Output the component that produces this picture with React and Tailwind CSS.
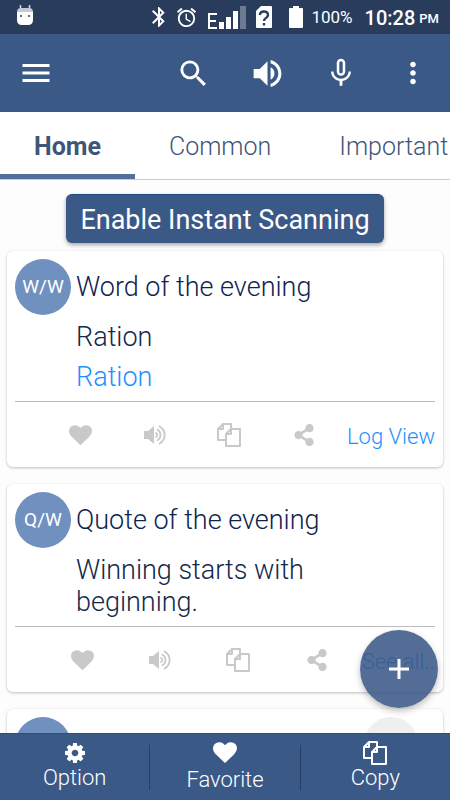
import { FaShareAlt } from "react-icons/fa";
import { MdAccessAlarm, MdBluetooth, MdMenu, MdMicNone, MdMoreVert, MdSearch, MdVolumeUp } from "react-icons/md";

const TABS = ["Home", "Common", "Important"];

const CARDS = [
  {
    badge: "W/W",
    title: "Word of the evening",
    text: "Ration",
    translation: "Ration",
    link: "Log View",
  },
  {
    badge: "Q/W",
    title: "Quote of the evening",
    text: "Winning starts with beginning.",
    link: "See all..",
  },
];

function HeartIcon({ className }) {
  return (
    <svg viewBox="0 128 1792 1536" fill="currentColor" className={className} aria-hidden="true">
      <path d="M896 1664q-26 0-44-18l-624-602q-10-8-27.500-26t-55.500-65.500-68-97.500-53.500-121-23.500-138q0-220 127-344t351-124q62 0 126.500 21.500t120 58 95.500 68.500 76 68q36-36 76-68t95.500-68.500 120-58 126.500-21.500q224 0 351 124t127 344q0 221-229 450l-623 600q-18 18-44 18z" />
    </svg>
  );
}

function CopyIcon({ className }) {
  return (
    <svg viewBox="0 0 24 24" fill="none" stroke="currentColor" strokeWidth="2" strokeLinejoin="round" className={className} aria-hidden="true">
      <path d="M9 17H1V6l5-5h8v5" />
      <path d="M6 1v5H1" />
      <path d="M14 6h9v17H9V11z" />
      <path d="M14 6v5H9" />
    </svg>
  );
}

function GearIcon({ className }) {
  return (
    <svg viewBox="0 0 1536 1536" fill="currentColor" className={className} aria-hidden="true">
      <path d="M1024 768q0-106-75-181t-181-75-181 75-75 181 75 181 181 75 181-75 75-181zm512-109v222q0 12-8 23t-20 13l-185 28q-19 54-39 91 35 50 107 138 10 12 10 25t-9 23q-27 37-99 108t-94 71q-12 0-26-9l-138-108q-44 23-91 38-16 136-29 186-7 28-36 28h-222q-14 0-24.500-8.500t-11.500-21.500l-28-184q-49-16-90-37l-141 107q-10 9-25 9-14 0-25-11-126-114-165-168-7-10-7-23 0-12 8-23 15-21 51-66.500t54-70.500q-27-50-41-99l-183-27q-13-2-21-12.500t-8-23.500v-222q0-12 8-23t19-13l186-28q14-46 39-92-40-57-107-138-10-12-10-24 0-10 9-23 26-36 98.500-107.500t94.500-71.500q13 0 26 10l138 107q44-23 91-38 16-136 29-186 7-28 36-28h222q14 0 24.500 8.500t11.500 21.500l28 184q49 16 90 37l142-107q9-9 24-9 13 0 25 10 129 119 165 170 7 8 7 22 0 12-8 23-15 21-51 66.500t-54 70.500q26 50 41 98l183 28q13 2 21 12.500t8 23.500z" />
    </svg>
  );
}

function SpeakerIcon({ className }) {
  return (
    <svg viewBox="0 0 22 20" className={className} aria-hidden="true">
      <path d="M0 6h4l6-5v18l-6-5H0z" fill="currentColor" />
      <g fill="none" stroke="currentColor" strokeWidth="1.8" strokeLinecap="round">
        <path d="M12 8a2.200 2.200 0 0 1 0 4" />
        <path d="M13.500 4.800a6 6 0 0 1 0 10.400" />
        <path d="M15.500 1.500a9.600 9.600 0 0 1 0 17" />
      </g>
    </svg>
  );
}

function StatusBar() {
  return (
    <div className="h-[34px] shrink-0 bg-[#293c5c] text-white flex items-center justify-between pl-4 pr-[11px]">
      <svg viewBox="0 0 18 22" className="w-[18px] h-[22px] mb-1" aria-hidden="true">
        <path d="M4.500 1v5M13.500 1v5" stroke="#d5dae2" strokeWidth="1.500" />
        <path d="M1 8q0-4 4-4h8q4 0 4 4z" fill="#c3cad6" />
        <path d="M1 8h16v8q0 5-5 5H6q-5 0-5-5z" fill="#fff" />
        <circle cx="5" cy="12" r="1" fill="#293c5c" />
        <circle cx="13" cy="12" r="1" fill="#293c5c" />
      </svg>
      <div className="flex items-center">
        <MdBluetooth className="w-6 h-6" />
        <MdAccessAlarm className="w-[23px] h-[23px] ml-1" />
        <svg viewBox="0 0 42 24" className="w-[42px] h-6 ml-2" aria-hidden="true">
          <path d="M11 9H3v14h8M3 16h7" fill="none" stroke="#fff" strokeWidth="2" />
          <path d="M13 17h5v7h-5zM20 12h5v12h-5zM27 6h5v18h-5z" fill="#fff" />
          <path d="M34 1h6v23h-6z" fill="#6d7b92" />
        </svg>
        <svg viewBox="0 0 16 22" className="w-4 h-[22px] ml-2" aria-hidden="true">
          <path d="M5 0h10q1 0 1 1v20q0 1-1 1H1q-1 0-1-1V5z" fill="#fff" />
          <path d="M4 9q0-3.500 4-3.500T12 9q0 2-2 3t-2 3M8 17v2.500" fill="none" stroke="#293c5c" strokeWidth="2.400" />
        </svg>
        <svg viewBox="0 0 14 22" className="w-[14px] h-[22px] ml-[17px]" aria-hidden="true">
          <path d="M4 0h6v2h3q1 0 1 1v18q0 1-1 1H1q-1 0-1-1V3q0-1 1-1h3z" fill="#fff" />
        </svg>
        <span className="text-[17px] ml-2 mt-px">100%</span>
        <span className="text-[20px] font-medium ml-3 mt-px">10:28</span>
        <span className="text-[13px] font-medium ml-1 mt-1">PM</span>
      </div>
    </div>
  );
}

function Header() {
  return (
    <header className="h-[78px] shrink-0 bg-[#3b5987] text-white flex items-center justify-between pl-[18px] pr-5 shadow-sm">
      <button type="button" aria-label="Menu">
        <MdMenu className="w-9 h-9" />
      </button>
      <div className="flex items-center gap-[38px]">
        <button type="button" aria-label="Search">
          <MdSearch className="w-[35px] h-[35px]" />
        </button>
        <button type="button" aria-label="Speak">
          <MdVolumeUp className="w-[37px] h-[37px]" />
        </button>
        <button type="button" aria-label="Voice input">
          <MdMicNone className="w-[34px] h-[34px]" />
        </button>
        <button type="button" aria-label="More">
          <MdMoreVert className="w-[34px] h-[34px]" />
        </button>
      </div>
    </header>
  );
}

function Card({ badge, title, text, translation, link }) {
  return (
    <article className="bg-white rounded-md px-2 pt-2 shadow-[0_1px_3px_rgba(0,0,0,0.25)]">
      <div className="flex items-center gap-[5px]">
        <span className="w-14 h-14 shrink-0 rounded-full bg-[#7090c0] text-white text-[19px] flex items-center justify-center">
          {badge}
        </span>
        <h2 className="text-[27px] leading-8 font-light text-[#0e2450]">{title}</h2>
      </div>
      <div className="pl-[61px] pr-10 pt-[6px] pb-2 text-[27px] leading-8 font-light">
        <p className="text-[#14284a]">{text}</p>
        {translation && <p className="text-[#1e90ff] mt-2">{translation}</p>}
      </div>
      <div className="h-[66px] border-t border-[#bdbdbd] flex items-center pl-7 text-[#c9c9c9]">
        <button type="button" aria-label="Favorite" className="flex-1 flex justify-center">
          <HeartIcon className="w-[23px] h-5" />
        </button>
        <button type="button" aria-label="Speak" className="flex-1 flex justify-center">
          <SpeakerIcon className="w-[22px] h-5" />
        </button>
        <button type="button" aria-label="Copy" className="flex-1 flex justify-center">
          <CopyIcon className="w-6 h-6" />
        </button>
        <button type="button" aria-label="Share" className="flex-1 flex justify-center">
          <FaShareAlt className="w-5 h-[22px]" />
        </button>
        <a href="#log" className="pl-[6px] pt-1 text-[22px] font-light text-[#1e90ff]">
          {link}
        </a>
      </div>
    </article>
  );
}

export default function App() {
  return (
    <div className="relative h-screen flex flex-col overflow-hidden bg-[#fdfdfd] font-['Roboto',sans-serif]">
      <StatusBar />
      <Header />
      <nav className="h-[68px] shrink-0 flex border-b border-[#cccccc] bg-white overflow-hidden">
        {TABS.map((tab, i) => (
          <button
            key={tab}
            type="button"
            className={
              i === 0
                ? "shrink-0 px-[34px] pt-2 text-[25px] font-bold text-[#3f5578] border-b-[5px] border-[#546e9c]"
                : "shrink-0 px-[34px] pt-2 text-[25px] font-light text-[#3f5578] border-b-[5px] border-transparent"
            }
          >
            {tab}
          </button>
        ))}
      </nav>
      <main className="flex-1 min-h-0 overflow-hidden px-[7px] pt-[14px]">
        <div className="flex justify-center">
          <button
            type="button"
            className="h-[49px] px-[14px] pt-[2px] rounded-md bg-[#3b5987] text-white text-[27px] border-t border-[#1f4a80] shadow-[0_2px_4px_rgba(0,0,0,0.35)]"
          >
            Enable Instant Scanning
          </button>
        </div>
        <div className="mt-2 flex flex-col gap-[17px]">
          {CARDS.map((card) => (
            <Card key={card.badge} {...card} />
          ))}
          <article className="bg-white rounded-md pl-2 pr-[25px] pt-2 flex justify-between shadow-[0_1px_3px_rgba(0,0,0,0.25)]">
            <span className="w-14 h-14 rounded-full bg-[#7090c0]" />
            <span className="w-[54px] h-[54px] rounded-full bg-[#efefef]" />
          </article>
        </div>
      </main>
      <button
        type="button"
        aria-label="Add"
        className="absolute right-3 bottom-[92px] w-[78px] h-[78px] rounded-full bg-[#3b5987]/88 shadow-[0_3px_6px_rgba(0,0,0,0.25)] flex items-center justify-center"
      >
        <svg viewBox="0 0 20 20" className="w-5 h-5" aria-hidden="true">
          <path d="M10 0v20M0 10h20" stroke="#fff" strokeWidth="3" />
        </svg>
      </button>
      <footer className="h-[67px] shrink-0 bg-[#3b5987] border-t border-[#2a4f80] text-white text-[22px] leading-[26px] font-light flex items-center">
        <button type="button" className="flex-1 flex flex-col items-center gap-[2px]">
          <GearIcon className="w-5 h-5" />
          Option
        </button>
        <span className="w-px h-[45px] bg-[#263f66]" />
        <button type="button" className="flex-1 flex flex-col items-center gap-1">
          <HeartIcon className="w-6 h-[21px]" />
          Favorite
        </button>
        <span className="w-px h-[45px] bg-[#263f66]" />
        <button type="button" className="flex-1 flex flex-col items-center pb-[2px]">
          <CopyIcon className="w-6 h-6" />
          Copy
        </button>
      </footer>
    </div>
  );
}
